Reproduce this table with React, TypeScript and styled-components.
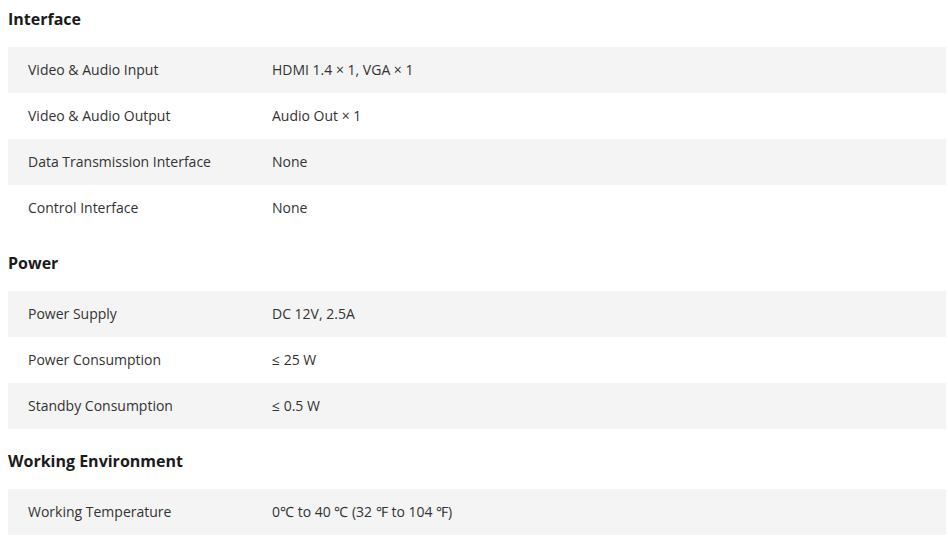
import React from "react";
import styled, { createGlobalStyle } from "styled-components";

const Global = createGlobalStyle`
  html, body { margin: 0; padding: 0; background: #fff; }
  body { font-family: "Open Sans", "Liberation Sans", sans-serif; }
  * { box-sizing: border-box; }
`;

const Page = styled.div`
  padding: 7px 2px 0 8px;
  display: flex;
  flex-direction: column;
`;

const Section = styled.section`
  display: flex;
  flex-direction: column;
  & + & { margin-top: 20px; }
`;

const Heading = styled.h3`
  margin: 0 0 16px;
  font-size: 16px;
  line-height: 24px;
  font-weight: 700;
  color: #1b1b1b;
`;

const Row = styled.div<{ $shaded: boolean }>`
  display: grid;
  grid-template-columns: 244px 1fr;
  align-items: center;
  height: 46px;
  padding: 0 0 2px 20px;
  background: ${(p) => (p.$shaded ? "#f4f4f4" : "#fff")};
  font-size: 14px;
  color: #333;
`;

const Label = styled.div``;
const Value = styled.div``;

const sections: { title: string; rows: [string, string][] }[] = [
  {
    title: "Interface",
    rows: [
      ["Video & Audio Input", "HDMI 1.4 × 1, VGA × 1"],
      ["Video & Audio Output", "Audio Out × 1"],
      ["Data Transmission Interface", "None"],
      ["Control Interface", "None"],
    ],
  },
  {
    title: "Power",
    rows: [
      ["Power Supply", "DC 12V, 2.5A"],
      ["Power Consumption", "≤ 25 W"],
      ["Standby Consumption", "≤ 0.5 W"],
    ],
  },
  {
    title: "Working Environment",
    rows: [["Working Temperature", "0℃ to 40 ℃ (32 ℉ to 104 ℉)"]],
  },
];

export default function App() {
  return (
    <>
      <Global />
      <Page>
        {sections.map((s) => (
          <Section key={s.title}>
            <Heading>{s.title}</Heading>
            {s.rows.map(([l, v], i) => (
              <Row key={l} $shaded={i % 2 === 0}>
                <Label>{l}</Label>
                <Value>{v}</Value>
              </Row>
            ))}
          </Section>
        ))}
      </Page>
    </>
  );
}
